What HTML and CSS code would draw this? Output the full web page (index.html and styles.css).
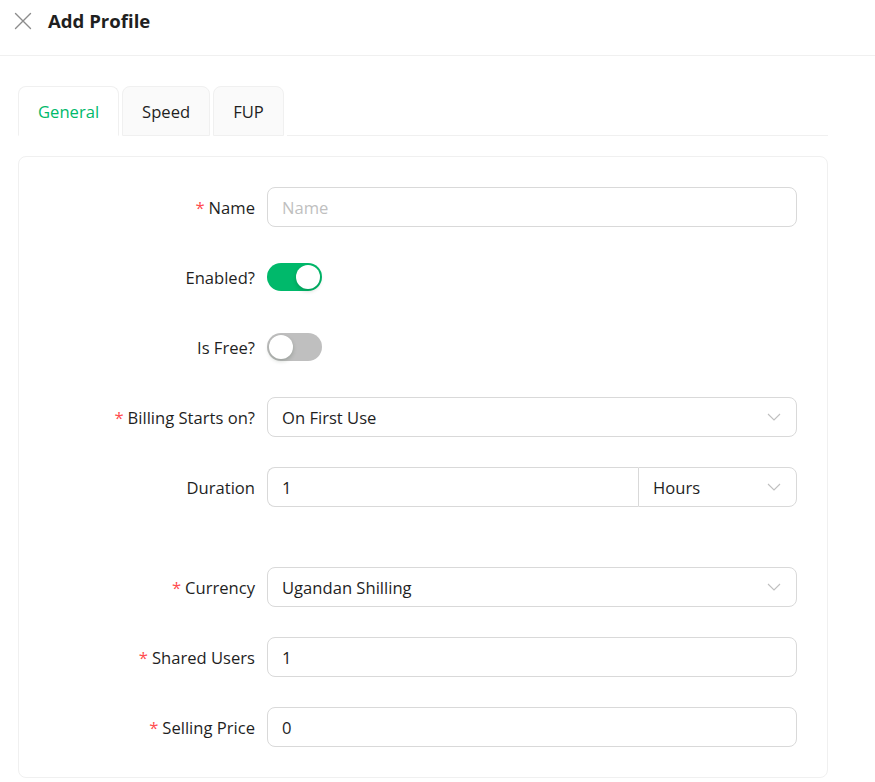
FILE: index.html
```html
<!DOCTYPE html>
<html lang="en">
<head>
<meta charset="utf-8">
<title>Add Profile</title>
<link rel="stylesheet" href="styles.css">
</head>
<body>
<header class="header">
  <button class="close" aria-label="Close">
    <svg width="18" height="18" viewBox="0 0 18 18"><path d="M1.5 1.5 L16.5 16.5 M16.5 1.5 L1.5 16.5" stroke="#8c8c8c" stroke-width="1.4" fill="none" stroke-linecap="round"/></svg>
  </button>
  <h1 class="title">Add Profile</h1>
</header>
<main class="content">
  <nav class="tabs">
    <div class="tab active">General</div>
    <div class="tab">Speed</div>
    <div class="tab">FUP</div>
    <div class="tab-rest"></div>
  </nav>
  <section class="card">
    <div class="row">
      <label class="label"><span class="req">*</span>Name</label>
      <div class="control"><div class="input placeholder">Name</div></div>
    </div>
    <div class="row">
      <label class="label">Enabled?</label>
      <div class="control"><span class="switch on"><span class="knob"></span></span></div>
    </div>
    <div class="row">
      <label class="label">Is Free?</label>
      <div class="control"><span class="switch off"><span class="knob"></span></span></div>
    </div>
    <div class="row">
      <label class="label"><span class="req">*</span>Billing Starts on?</label>
      <div class="control"><div class="input select">On First Use<svg class="chev" width="14" height="8" viewBox="0 0 14 8"><path d="M1 1 L7 7 L13 1" stroke="#bfbfbf" stroke-width="1.1" fill="none"/></svg></div></div>
    </div>
    <div class="row">
      <label class="label">Duration</label>
      <div class="control group">
        <div class="input g-left">1</div>
        <div class="input select g-right">Hours<svg class="chev" width="14" height="8" viewBox="0 0 14 8"><path d="M1 1 L7 7 L13 1" stroke="#bfbfbf" stroke-width="1.1" fill="none"/></svg></div>
      </div>
    </div>
    <div class="spacer"></div>
    <div class="row">
      <label class="label"><span class="req">*</span>Currency</label>
      <div class="control"><div class="input select">Ugandan Shilling<svg class="chev" width="14" height="8" viewBox="0 0 14 8"><path d="M1 1 L7 7 L13 1" stroke="#bfbfbf" stroke-width="1.1" fill="none"/></svg></div></div>
    </div>
    <div class="row">
      <label class="label"><span class="req">*</span>Shared Users</label>
      <div class="control"><div class="input">1</div></div>
    </div>
    <div class="row">
      <label class="label"><span class="req">*</span>Selling Price</label>
      <div class="control"><div class="input">0</div></div>
    </div>
  </section>
</main>
</body>
</html>
```
FILE: styles.css
```css
* { box-sizing: border-box; }
html, body { margin: 0; padding: 0; background: #fff; }
body {
  font-family: "Open Sans", "Noto Sans", sans-serif;
  font-size: 16.6px;
  color: #1f1f1f;
  width: 875px;
}
.header {
  height: 56px;
  border-bottom: 1px solid #f0f0f0;
  display: flex;
  align-items: center;
  padding: 0 0 14px 14px;
  gap: 16px;
}
.close {
  border: 0;
  background: none;
  padding: 0;
  width: 18px;
  height: 18px;
  display: flex;
  cursor: pointer;
}
.title {
  margin: 0;
  font-size: 18.6px;
  font-weight: 700;
  color: #1f1f1f;
  line-height: 24px;
}
.content {
  padding: 30px 47px 0 18px;
}
.tabs {
  display: flex;
  align-items: flex-end;
  gap: 3px;
  height: 50px;
}
.tab {
  height: 50px;
  padding: 0 19px;
  display: flex;
  align-items: center;
  background: #fafafa;
  border: 1px solid #f0f0f0;
  border-radius: 8px 8px 0 0;
  color: #1f1f1f;
}
.tab.active {
  background: #fff;
  color: #00b96b;
  border-bottom-color: #fff;
}
.tab-rest {
  flex: 1;
  border-bottom: 1px solid #f0f0f0;
}
.card {
  margin-top: 20px;
  border: 1px solid #f0f0f0;
  border-radius: 8px;
  padding: 30px;
  display: flex;
  flex-direction: column;
  gap: 30px;
}
.spacer { height: 0; }
.row {
  display: grid;
  grid-template-columns: 206px 530px;
  column-gap: 12px;
  align-items: center;
  height: 40px;
}
.label {
  justify-self: end;
  display: flex;
  align-items: center;
  white-space: nowrap;
}
.req {
  color: #ff4d4f;
  margin-right: 4px;
}
.control { display: flex; align-items: center; height: 40px; }
.input {
  width: 100%;
  height: 40px;
  border: 1px solid #d9d9d9;
  border-radius: 8px;
  padding: 0 14px;
  display: flex;
  align-items: center;
  color: #1f1f1f;
}
.placeholder { color: #bfbfbf; }
.select { justify-content: space-between; }
.chev { margin-right: 1px; }
.group .g-left {
  width: 371px;
  border-radius: 8px 0 0 8px;
  border-right: 0;
}
.group .g-right {
  width: 159px;
  border-radius: 0 8px 8px 0;
}
.switch {
  width: 55px;
  height: 28px;
  border-radius: 14px;
  position: relative;
  display: inline-block;
}
.switch.on { background: #00b96b; }
.switch.off { background: #bfbfbf; }
.knob {
  position: absolute;
  top: 2px;
  width: 24px;
  height: 24px;
  border-radius: 50%;
  background: #fff;
  box-shadow: 0 2px 4px rgba(0, 35, 11, 0.2);
}
.switch.on .knob { right: 2px; }
.switch.off .knob { left: 2px; }
```
